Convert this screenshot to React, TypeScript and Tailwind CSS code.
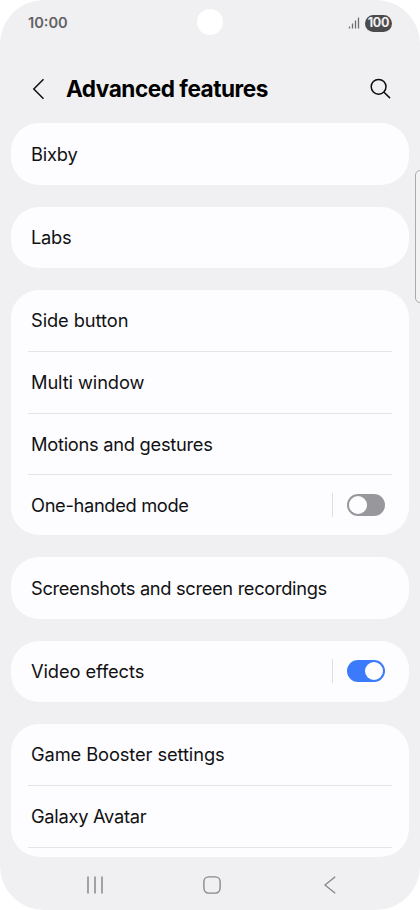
import { useState } from "react";

interface Item {
    label: string;
    // Espaciado entre letras ajustado por etiqueta
    tracking: string;
    toggle?: boolean;
}

const groups: Item[][] = [
    [{ label: "Bixby", tracking: "tracking-[-0.2px]" }],
    [{ label: "Labs", tracking: "tracking-[-0.25px]" }],
    [
        { label: "Side button", tracking: "tracking-[-0.08px]" },
        { label: "Multi window", tracking: "tracking-[-0.1px]" },
        { label: "Motions and gestures", tracking: "tracking-[-0.27px]" },
        { label: "One-handed mode", tracking: "tracking-[-0.34px]", toggle: false },
    ],
    [{ label: "Screenshots and screen recordings", tracking: "tracking-[-0.33px]" }],
    [{ label: "Video effects", tracking: "tracking-[-0.1px]", toggle: true }],
    [
        { label: "Game Booster settings", tracking: "tracking-[-0.1px]" },
        { label: "Galaxy Avatar", tracking: "tracking-[-0.28px]" },
    ],
];

function Toggle({ initial, label }: { initial: boolean; label: string }) {
    const [on, setOn] = useState(initial);

    return (
        <button
            role="switch"
            aria-checked={on}
            aria-label={label}
            onClick={() => setOn(!on)}
            className={`flex h-[22px] w-[38px] items-center rounded-full px-[2px] ${
                on ? "justify-end bg-[#3b7bfb]" : "justify-start bg-[#98979c]"
            }`}
        >
            <span className="size-[18px] rounded-full bg-[#fdfdff]" />
        </button>
    );
}

function Row({ item }: { item: Item }) {
    return (
        <div className="flex h-[61.33px] items-center border-[#e4e4e6] pl-[3px] pr-[6.5px] not-first:border-t">
            <span className={`flex-1 whitespace-nowrap pt-px text-[18.3px] text-[#111113] ${item.tracking}`}>
                {item.label}
            </span>
            {item.toggle !== undefined && (
                <div className="flex items-center gap-[14px]">
                    <span className="h-6 w-px bg-[#dededf]" />
                    <Toggle initial={item.toggle} label={item.label} />
                </div>
            )}
        </div>
    );
}

function StatusBar() {
    return (
        <div className="grid h-[46px] grid-cols-3 items-center px-[28px]">
            <span className="pt-[2px] text-[14.6px] font-semibold text-[#626264]">10:00</span>
            <span className="mt-[-2px] size-[26px] justify-self-center rounded-full bg-white" />
            <div className="flex items-center justify-end gap-[5px]">
                <svg width="12" height="12" viewBox="0 0 12 12" fill="none" stroke="#6e6e70" strokeWidth="1.3">
                    <path d="M1.5 9.5v2M4.5 6.5v5M7.5 3.5v8M10.5.5v11" />
                </svg>
                <span className="flex h-[17px] w-[27px] items-center justify-center rounded-full bg-[#4b4b4d] pt-px text-[12.5px] font-bold tracking-[-0.2px] text-[#f0f0f2]">
                    100
                </span>
            </div>
        </div>
    );
}

export default function App() {
    return (
        <div className="h-[910px] w-[420px] overflow-hidden bg-white font-['Inter','Roboto',sans-serif]">
            <div className="relative flex h-full flex-col overflow-hidden rounded-[44px] bg-[#f0f0f2]">
                <StatusBar />

                {/* Cabecera */}
                <header className="flex h-[77.4px] items-center pl-[32px] pr-[29px] pt-[8px]">
                    <svg width="14" height="22" viewBox="0 0 14 22" fill="none" stroke="#111" strokeWidth="1.5">
                        <path d="M11.5 1.2 1.8 11l9.7 9.8" />
                    </svg>
                    <h1 className="ml-[20px] flex-1 whitespace-nowrap text-[22.6px] font-bold tracking-[-0.48px] text-black">
                        Advanced features
                    </h1>
                    <svg width="21" height="21" viewBox="0 0 21 21" fill="none" stroke="#0c0c0c" strokeWidth="1.5">
                        <circle cx="8.6" cy="8.8" r="7.4" />
                        <path d="m14 14.2 6 5.9" />
                    </svg>
                </header>

                {/* Lista de ajustes */}
                <main className="mx-[11px] flex h-[733.7px] flex-col gap-[22px] overflow-hidden rounded-b-[28px]">
                    {groups.map((group, i) => (
                        <section
                            key={i}
                            className={`shrink-0 rounded-[28px] bg-[#fdfdff] pl-[17px] pr-[17.5px] ${
                                i === groups.length - 1 ? "h-[133px]" : ""
                            }`}
                        >
                            {group.map((item) => (
                                <Row key={item.label} item={item} />
                            ))}
                            {i === groups.length - 1 && <div className="h-px bg-[#e4e4e6]" />}
                        </section>
                    ))}
                </main>

                {/* Barra de navegación */}
                <nav className="flex flex-1 items-center pl-[86px] pt-[2px] text-[#88888a]">
                    <svg width="18" height="18" viewBox="0 0 18 18" stroke="currentColor" strokeWidth="1.5">
                        <path d="M2 .5v17M9 .5v17M16 .5v17" />
                    </svg>
                    <svg
                        className="ml-[99px]"
                        width="18"
                        height="18"
                        viewBox="0 0 18 18"
                        fill="none"
                        stroke="currentColor"
                        strokeWidth="1.4"
                    >
                        <rect x=".9" y=".9" width="16.2" height="16.2" rx="4.8" />
                    </svg>
                    <svg
                        className="ml-[103px]"
                        width="12"
                        height="18"
                        viewBox="0 0 12 18"
                        fill="none"
                        stroke="currentColor"
                        strokeWidth="1.4"
                    >
                        <path d="M11.2.8 1 9l10.2 8.2" />
                    </svg>
                </nav>

                {/* Tirador del panel lateral */}
                <div className="absolute right-[-5px] top-[170px] h-[133px] w-[10px] rounded-[5px] border border-[#aaaaac] bg-[#f3f3f4]" />
            </div>
        </div>
    );
}
